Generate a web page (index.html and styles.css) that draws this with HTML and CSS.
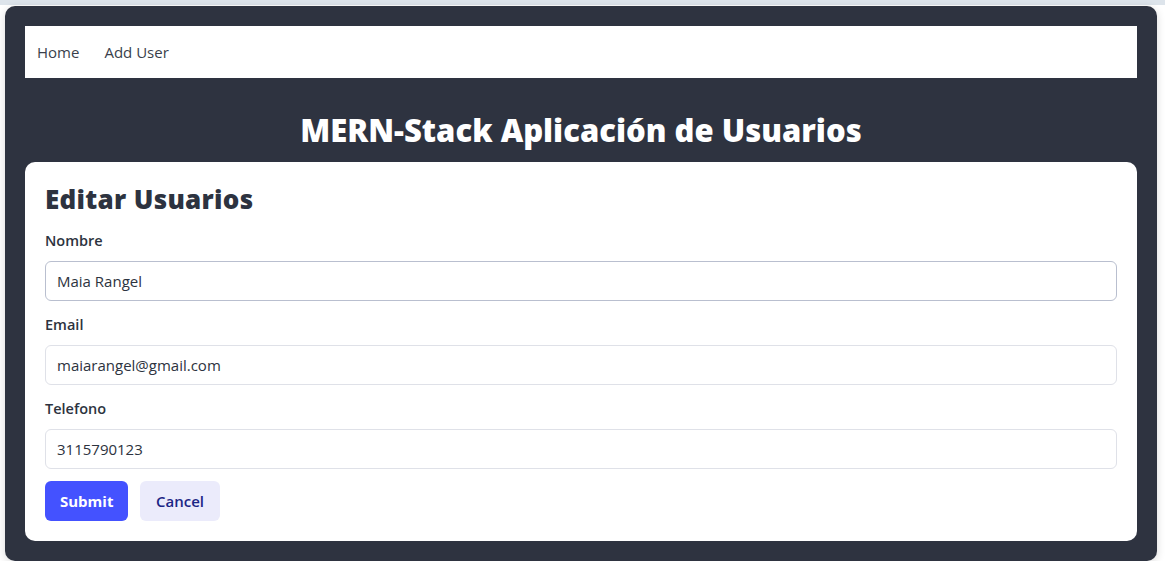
FILE: index.html
```html
<!DOCTYPE html>
<html lang="es">
<head>
<meta charset="utf-8">
<title>MERN-Stack Aplicación de Usuarios</title>
<link rel="stylesheet" href="styles.css">
</head>
<body>
<div class="topband"></div>
<div class="app">
  <nav class="nav">
    <a class="nav-link" href="#">Home</a>
    <a class="nav-link" href="#">Add User</a>
  </nav>
  <h1 class="app-title">MERN-Stack Aplicación de Usuarios</h1>
  <div class="card">
    <h2 class="card-title">Editar Usuarios</h2>
    <form class="form">
      <div class="field">
        <label class="label">Nombre</label>
        <input class="input input-focus" type="text" value="Maia Rangel">
      </div>
      <div class="field">
        <label class="label">Email</label>
        <input class="input" type="text" value="maiarangel@gmail.com">
      </div>
      <div class="field field-last">
        <label class="label">Telefono</label>
        <input class="input" type="text" value="3115790123">
      </div>
      <div class="actions">
        <button class="btn btn-primary" type="button">Submit</button>
        <button class="btn btn-secondary" type="button">Cancel</button>
      </div>
    </form>
  </div>
</div>
</body>
</html>
```
FILE: styles.css
```css
* { box-sizing: border-box; }
html, body { margin: 0; padding: 0; }
body {
  background: #ffffff;
  font-family: "Open Sans", "Noto Sans", sans-serif;
  color: #2d3340;
}
.topband {
  height: 5px;
  background: #dde4eb;
}
.app {
  margin: 1px 8px 0 5px;
  background: #2e3340;
  border-radius: 10px;
  padding: 20px;
  box-shadow: 0 2px 8px rgba(0,0,0,0.15);
}
.nav {
  background: #ffffff;
  height: 52px;
  display: flex;
  align-items: center;
}
.nav-link {
  padding: 0 12px;
  font-size: 15px;
  color: #3a3f4b;
  text-decoration: none;
}
.nav-link + .nav-link { padding-left: 13px; }
.app-title {
  margin: 0;
  padding: 33px 0 13px;
  text-align: center;
  color: #ffffff;
  font-size: 31px;
  line-height: 38px;
  font-weight: 800;
  letter-spacing: 0;
}
.card {
  background: #ffffff;
  border-radius: 10px;
  padding: 20px;
}
.card-title {
  margin: 0 0 15px;
  font-size: 26px;
  line-height: 34px;
  font-weight: 800;
  letter-spacing: 0.3px;
  color: #2d3340;
}
.form { display: flex; flex-direction: column; }
.field { display: flex; flex-direction: column; margin-bottom: 14px; }
.field-last { margin-bottom: 12px; }
.label {
  font-size: 14.5px;
  line-height: 20px;
  font-weight: 600;
  color: #2d3340;
  margin-bottom: 10px;
}
.input {
  height: 40px;
  border: 1px solid #dfe1e8;
  border-radius: 6px;
  padding: 0 11px;
  font-family: inherit;
  font-size: 15px;
  color: #2d3340;
  background: #fff;
  outline: none;
}
.input-focus { border-color: #b9bfcf; }
.actions { display: flex; gap: 12px; }
.btn {
  height: 40px;
  border: none;
  border-radius: 6px;
  font-family: inherit;
  font-size: 15px;
  font-weight: 700;
  padding: 0 15px;
  cursor: pointer;
}
.btn-primary { background: #4452ff; color: #ffffff; width: 83px; }
.btn-secondary { background: #ebebfb; color: #1b2585; font-weight: 600; width: 80px; }
```
